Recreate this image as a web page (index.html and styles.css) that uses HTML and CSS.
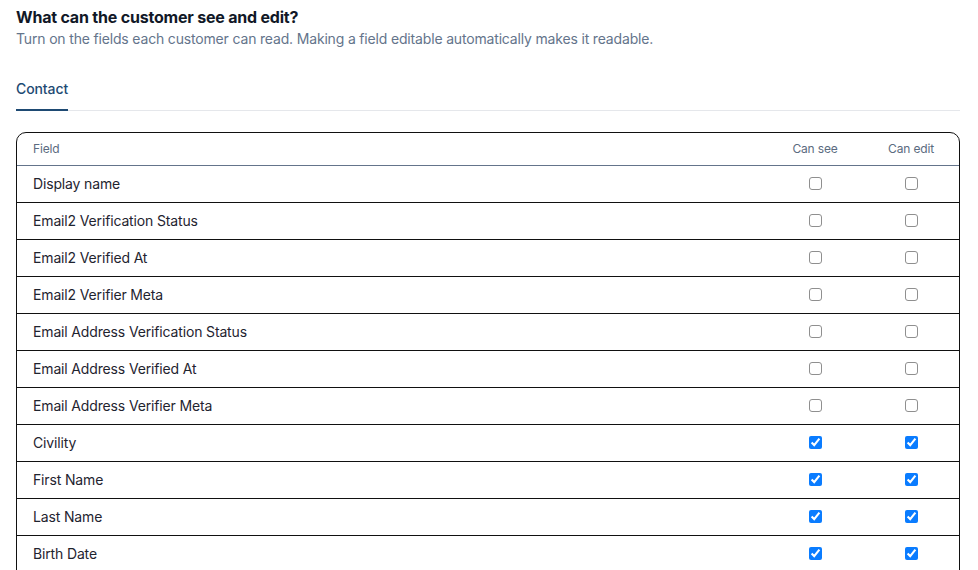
FILE: index.html
```html
<!DOCTYPE html>
<html lang="en">
<head>
    <meta charset="UTF-8">
    <meta name="viewport" content="width=device-width, initial-scale=1.0">
    <link rel="stylesheet" href="styles.css">

    <title>Customer Permissions</title>

</head>
<body>

    <div class="section-head">
        <h2>What can the customer see and edit?</h2>
        <p class="hint">Turn on the fields each customer can read. Making a field editable automatically makes it readable.</p>
    </div>

    <div class="tabs">
        <a href="#" class="tab active">Contact</a>
    </div>

    <table class="fields">
        <thead>
            <tr>
                <th>Field</th>
                <th class="check-col">Can see</th>
                <th class="check-col">Can edit</th>
            </tr>
        </thead>
        <tbody>
            <tr><td>Display name</td><td class="check-col"><input type="checkbox"></td><td class="check-col"><input type="checkbox"></td></tr>
            <tr><td>Email2 Verification Status</td><td class="check-col"><input type="checkbox"></td><td class="check-col"><input type="checkbox"></td></tr>
            <tr><td>Email2 Verified At</td><td class="check-col"><input type="checkbox"></td><td class="check-col"><input type="checkbox"></td></tr>
            <tr><td>Email2 Verifier Meta</td><td class="check-col"><input type="checkbox"></td><td class="check-col"><input type="checkbox"></td></tr>
            <tr><td>Email Address Verification Status</td><td class="check-col"><input type="checkbox"></td><td class="check-col"><input type="checkbox"></td></tr>
            <tr><td>Email Address Verified At</td><td class="check-col"><input type="checkbox"></td><td class="check-col"><input type="checkbox"></td></tr>
            <tr><td>Email Address Verifier Meta</td><td class="check-col"><input type="checkbox"></td><td class="check-col"><input type="checkbox"></td></tr>
            <tr><td>Civility</td><td class="check-col"><input type="checkbox" checked></td><td class="check-col"><input type="checkbox" checked></td></tr>
            <tr><td>First Name</td><td class="check-col"><input type="checkbox" checked></td><td class="check-col"><input type="checkbox" checked></td></tr>
            <tr><td>Last Name</td><td class="check-col"><input type="checkbox" checked></td><td class="check-col"><input type="checkbox" checked></td></tr>
            <tr><td>Birth Date</td><td class="check-col"><input type="checkbox" checked></td><td class="check-col"><input type="checkbox" checked></td></tr>
            <tr><td>Phone Number</td><td class="check-col"><input type="checkbox" checked></td><td class="check-col"><input type="checkbox" checked></td></tr>
        </tbody>
    </table>

</body>
</html>
```

FILE: styles.css
```css
body {
    font-family: 'Inter', 'Liberation Sans', sans-serif;
    color: #111827;
    background-color: #fff;
    margin: 0;
    padding: 7px 18px 16px 16px;
}

.section-head h2 {
    font-size: 16px;
    line-height: 20px;
    font-weight: 700;
    letter-spacing: -0.2px;
    margin: 0;
}

.hint {
    font-size: 14px;
    line-height: 20px;
    color: #64748b;
    letter-spacing: -0.17px;
    margin: 2px 0 0;
}

.tabs {
    display: flex;
    margin-top: 30px;
    border-bottom: 1px solid #e5e7eb;
}

.tab {
    font-size: 14px;
    line-height: 20px;
    font-weight: 500;
    letter-spacing: -0.1px;
    color: #1e4a73;
    text-decoration: none;
    padding-bottom: 10px;
    border-bottom: 2px solid #1e4a73;
    margin-bottom: -1px;
}

.fields {
    width: 100%;
    margin-top: 21px;
    border: 1px solid #111;
    border-radius: 10px;
    border-collapse: separate;
    border-spacing: 0;
    font-size: 14px;
    letter-spacing: -0.15px;
}

.fields th {
    font-size: 12px;
    font-weight: 400;
    color: #5b6b80;
    text-align: left;
    height: 30px;
    padding: 0 16px 2px;
    border-bottom: 1px solid #64748b;
}

.fields td {
    height: 34px;
    padding: 0 16px 2px;
    color: #1f2430;
    border-bottom: 1px solid #111;
}

.fields .check-col {
    width: 64px;
    text-align: center;
}

.fields tbody tr:last-child td {
    border-bottom: none;
}

input[type="checkbox"] {
    width: 13px;
    height: 13px;
    margin: 0 0 2px;
    vertical-align: middle;
    accent-color: #0a7cff;
}

/* empty boxes get a softer outline than the browser default */
input[type="checkbox"]:not(:checked) {
    appearance: none;
    border: 1px solid #8f8f8f;
    border-radius: 3px;
    background-color: #fff;
}
```
